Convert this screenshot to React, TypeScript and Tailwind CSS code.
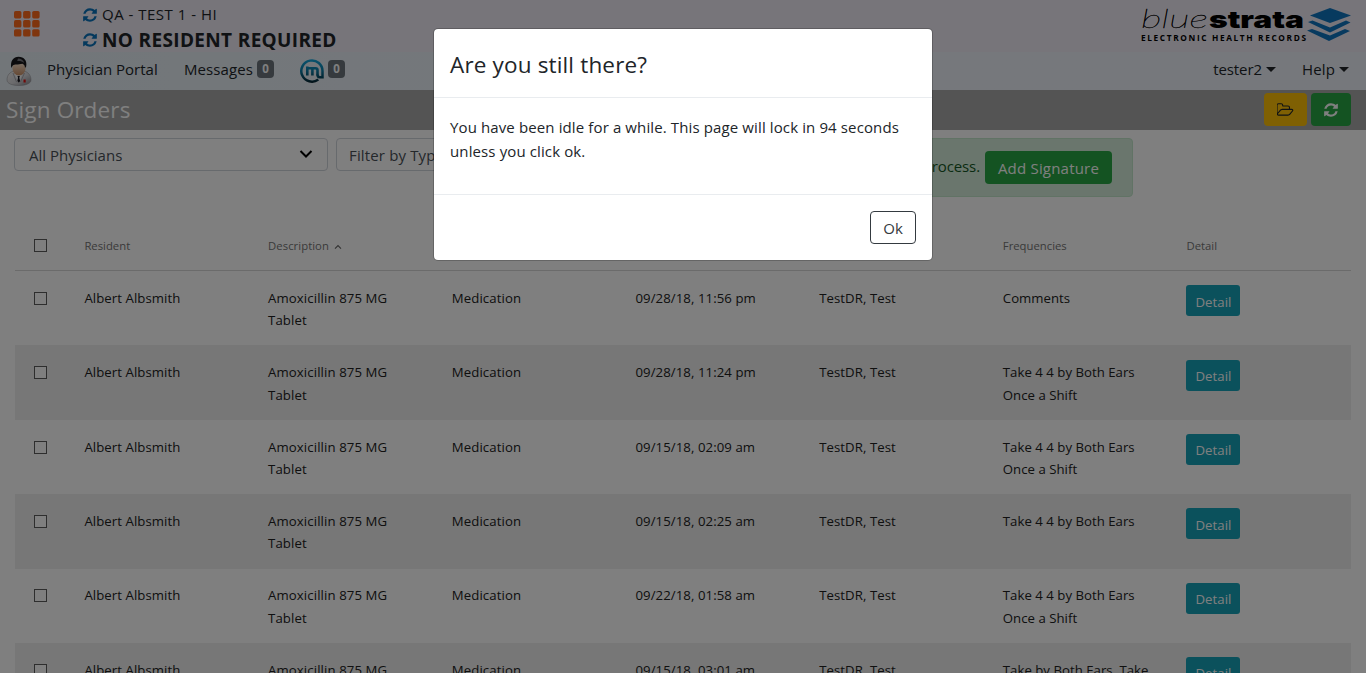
import React from "react";

const REFRESH =
  "M1639 1056q0 5-1 7-64 268-268 434.5t-478 166.5q-146 0-282.5-55t-243.5-157l-129 129q-19 19-45 19t-45-19-19-45v-448q0-26 19-45t45-19h448q26 0 45 19t19 45-19 45l-137 137q71 66 161 102t187 36q134 0 250-65t186-179q11-17 53-117 8-23 30-23h192q13 0 22.5 9.5t9.5 22.5zm25-800v448q0 26-19 45t-45 19h-448q-26 0-45-19t-19-45 19-45l138-138q-148-137-349-137-134 0-250 65t-186 179q-11 17-53 117-8 23-30 23h-199q-13 0-22.5-9.5t-9.5-22.5v-7q65-268 270-434.5t480-166.5q146 0 284 55.5t245 156.5l130-129q19-19 45-19t45 19 19 45z";
const FOLDER =
  "M1717 931q0-35-53-35h-1088q-40 0-85.5 21.5t-71.5 52.5l-294 363q-18 24-18 40 0 35 53 35h1088q40 0 86-22t71-53l294-363q18-22 18-39zm-1141-163h768v-160q0-40-28-68t-68-28h-576q-40 0-68-28t-28-68v-64q0-40-28-68t-68-28h-320q-40 0-68 28t-28 68v853l256-315q44-53 116-87.5t140-34.5zm1269 163q0 62-46 120l-295 363q-43 53-116 87.5t-140 34.5h-1088q-92 0-158-66t-66-158v-960q0-92 66-158t158-66h320q92 0 158 66t66 158v32h544q92 0 158 66t66 158v160h192q54 0 99 24.5t67 70.5q15 32 15 68z";

function RefreshIcon({ className }: { className: string }) {
  return (
    <svg viewBox="0 0 1792 1792" className={className} fill="currentColor">
      <path d={REFRESH} />
    </svg>
  );
}

function GridIcon() {
  return (
    <svg viewBox="0 0 26 26" className="h-[26px] w-[26px]" fill="#ff6a1c">
      {[0, 9.1, 18.2].map((y) =>
        [0, 9.1, 18.2].map((x) => <rect key={`${x}-${y}`} x={x} y={y} width="7.4" height="7.4" rx="1.6" />)
      )}
    </svg>
  );
}

function DoctorIcon() {
  return (
    <svg viewBox="0 0 26 30" className="h-[30px] w-[26px]">
      <defs>
        <linearGradient id="coat" x1="0" x2="1" y1="0" y2="1">
          <stop offset="0" stopColor="#f4f4f4" />
          <stop offset="0.55" stopColor="#d6d6da" />
          <stop offset="1" stopColor="#85858b" />
        </linearGradient>
        <linearGradient id="face" x1="0" x2="0" y1="0" y2="1">
          <stop offset="0" stopColor="#fff0de" />
          <stop offset="1" stopColor="#c98f65" />
        </linearGradient>
      </defs>
      <path d="M1 24c0-5 3-8 7-9l5 3 5-3c4 1 7 4 7 9 0 3.500-5 5.500-12 5.500S1 27.500 1 24z" fill="url(#coat)" stroke="#909096" strokeWidth=".5" />
      <path d="M8.500 17.500 12 25l1 2 3.500-9.500z" fill="#f8f8f8" />
      <path d="M11.500 20h2.400l-.6 1.800.8 3.200-1.200 1.800-1.500-1.800.6-3.200z" fill="#15151d" />
      <path d="M7 17l3.500 9M18.500 17l-4 9" stroke="#9a9aa2" strokeWidth=".8" />
      <ellipse cx="13" cy="12" rx="6.600" ry="7.600" fill="url(#face)" />
      <path d="M5.300 12C4 5 7.500.8 12.500.8c5.600 0 8.800 3.800 7.700 9.700L19 12c0-2-.8-3.500-2.500-4.200C12 9 8.500 8 6.800 9.500z" fill="#17171a" />
      <path d="M12 2.500c3 0 5.500 1.500 6.200 4.500-2-1.800-4-2.200-7-2z" fill="#77777d" />
      <rect x="17.500" y="23.500" width="2.200" height="3" fill="#e01515" />
    </svg>
  );
}

function MIcon() {
  return (
    <svg viewBox="0 0 24 24" className="h-6 w-6" fill="none">
      <defs>
        <linearGradient id="ring" x1="0" x2="0" y1="0" y2="24" gradientUnits="userSpaceOnUse">
          <stop offset="0" stopColor="#13a8df" />
          <stop offset="0.5" stopColor="#0b7ba5" />
          <stop offset="1" stopColor="#04202c" />
        </linearGradient>
      </defs>
      <path d="M18.300 20.500A10.600 10.600 0 1 1 22.500 12.500v5.700h-2.700c-1.500 0-2.300-.8-2.300-2.700" stroke="url(#ring)" strokeWidth="2.500" />
      <path d="M7.300 16.500V7.500M7.300 9.300H15.500q2 0 2 2v5.200M12.400 9v7.500" stroke="url(#ring)" strokeWidth="2.600" />
    </svg>
  );
}

function Logo() {
  return (
    <svg viewBox="0 0 214 38" className="h-[38px] w-[214px] overflow-visible">
      <text x="1" y="22.800" textLength="67" lengthAdjust="spacingAndGlyphs" fontFamily="Lato, sans-serif" fontStyle="italic" fontWeight="100" fontSize="26" stroke="#000" strokeWidth="0.35">
        blue
      </text>
      <text x="69" y="22.800" textLength="95" lengthAdjust="spacingAndGlyphs" fontFamily="Inter, sans-serif" fontWeight="900" fontSize="23.800">
        strata
      </text>
      <text x="1" y="36" textLength="165" lengthAdjust="spacing" fontFamily="Open Sans, sans-serif" fontWeight="700" fontSize="8.300">
        ELECTRONIC HEALTH RECORDS
      </text>
      <g fill="#0f74bf">
        <path d="M190 3 211 10.500 190 18 170 10.500z" />
        <path d="M168 17 172.500 15.500 190 22.500 206 15.500 210.500 17.500 190 27.500z" />
        <path d="M167 25.500 172 24 190 30.500 205 24 210 26 189 36z" />
      </g>
    </svg>
  );
}

function Badge() {
  return (
    <span className="mb-1 flex h-[18px] w-[17px] items-center justify-center rounded bg-[#6c757d] text-[11.500px] leading-none font-bold text-white">0</span>
  );
}

function Caret() {
  return <span className="mb-1 ml-1 h-0 w-0 border-x-[5px] border-t-[5px] border-x-transparent border-t-[#212529]" />;
}

const rows = [
  { date: "09/28/18, 11:56 pm", freq: "Comments" },
  { date: "09/28/18, 11:24 pm", freq: "Take 4 4 by Both Ears Once a Shift" },
  { date: "09/15/18, 02:09 am", freq: "Take 4 4 by Both Ears Once a Shift" },
  { date: "09/15/18, 02:25 am", freq: "Take 4 4 by Both Ears" },
  { date: "09/22/18, 01:58 am", freq: "Take 4 4 by Both Ears Once a Shift" },
  { date: "09/15/18, 03:01 am", freq: "Take by Both Ears, Take" },
];

const columns = "grid grid-cols-[50px_repeat(7,183.700px)]";

function Check() {
  return <span className="block h-[13px] w-[13px] border border-[#5c5c5c] bg-white" />;
}

function OrdersTable() {
  return (
    <div className="mx-[15px] mt-6 w-[1336px]">
      <div className={`${columns} h-[50px] items-center border-b border-[#d6d6d6] text-[11.300px] text-[#757575]`}>
        <div className="pl-[19px]"><Check /></div>
        <div className="pt-[2px] pl-[19.400px]">Resident</div>
        <div className="flex items-center pt-[2px] pl-[19.400px] tracking-[0.05px]">
          Description
          <svg viewBox="0 0 8 6" className="ml-[5px] h-[6px] w-2" fill="none" stroke="#666" strokeWidth="1.100">
            <path d="M1 4.700 4 1.500l3 3.200" />
          </svg>
        </div>
        <div />
        <div />
        <div />
        <div className="pt-[2px] pl-[19.400px]">Frequencies</div>
        <div className="pt-[2px] pl-[19.400px]">Detail</div>
      </div>
      {rows.map((r, i) => (
        <div
          key={i}
          className={`${columns} h-[74.380px] pt-[15.800px] text-[13.200px] leading-[22.400px] tracking-[0.07px] text-[#212121] ${i % 2 ? "bg-[#eeeeee]" : "bg-white"}`}
        >
          <div className="pt-[5px] pl-[19px]"><Check /></div>
          <div className="pl-[19.400px]">Albert Albsmith</div>
          <div className="px-[19.400px] tracking-[0.1px]">Amoxicillin 875 MG Tablet</div>
          <div className="pl-[19.400px] tracking-[0.1px]">Medication</div>
          <div className="pl-[19.400px]">{r.date}</div>
          <div className="pl-[19.400px]">TestDR, Test</div>
          <div className="pr-[16px] pl-[19.400px] tracking-[0.02px]">{r.freq}</div>
          <div className="-mt-[1.600px] pl-[18.800px]">
            <button className="block h-[31px] w-[54px] rounded-[3px] bg-[#17a2b8] pt-[3px] pl-px text-[13.200px] leading-none text-white">Detail</button>
          </div>
        </div>
      ))}
    </div>
  );
}

function Page() {
  return (
    <div className="flex h-full flex-col overflow-hidden">
      <header className="flex h-[52px] shrink-0 justify-between bg-[#eeeaf4]">
        <div className="flex">
          <div className="pt-[11px] pl-[14px]"><GridIcon /></div>
          <div className="pt-[2px] pl-[42px]">
            <div className="flex h-[25px] items-center gap-1 text-[15px] tracking-[0.5px]">
              <RefreshIcon className="h-4 w-4 text-[#0a73bb]" />
              QA - TEST 1 - HI
            </div>
            <div className="flex h-[26px] items-center gap-1 text-[19px] font-bold tracking-[0.35px]">
              <RefreshIcon className="h-4 w-4 text-[#0a73bb]" />
              NO RESIDENT REQUIRED
            </div>
          </div>
        </div>
        <div className="pt-[5px] pr-[12px]"><Logo /></div>
      </header>
      <nav className="flex h-[38px] shrink-0 items-center justify-between bg-linear-to-r from-[#e4edf3] via-[#ecf1f9] to-[#ecf1f9] text-[15px]">
        <div className="flex items-center">
          <div className="w-[47px] pl-[6px]"><DoctorIcon /></div>
          <span className="w-[137px] pb-1">Physician Portal</span>
          <span className="w-[73px] pb-1 tracking-[0.1px]">Messages</span>
          <Badge />
          <span className="mr-1 ml-[26px]"><MIcon /></span>
          <Badge />
        </div>
        <div className="flex items-center pr-[17px]">
          <span className="pb-1 tracking-[-0.1px]">tester2</span>
          <Caret />
          <span className="ml-[26px] pb-1 tracking-[0.15px]">Help</span>
          <Caret />
        </div>
      </nav>
      <div className="flex h-10 shrink-0 items-center justify-between bg-[#a8a8a8] pr-[15px] pl-[6px]">
        <h1 className="text-[22.500px] tracking-[0.15px] text-white">Sign Orders</h1>
        <div className="flex gap-1 pb-px">
          <button className="flex h-[33px] w-[43px] items-center justify-center rounded bg-[#ffc107] text-[#212529]">
            <svg viewBox="0 0 1920 1792" className="h-4 w-[17px]" fill="currentColor"><path d={FOLDER} /></svg>
          </button>
          <button className="flex h-[33px] w-10 items-center justify-center rounded bg-[#28a745] text-white">
            <RefreshIcon className="h-4 w-4" />
          </button>
        </div>
      </div>
      <div className="flex h-[67px] shrink-0 items-start pt-2 pl-[14px] text-[15px]">
        <div className="flex h-[33px] w-[314px] items-center justify-between rounded border border-[#ced4da] pr-[14px] pl-[14px] text-[#495057]">
          <span className="pt-[2px]">All Physicians</span>
          <svg viewBox="0 0 14 10" className="mb-px h-[10px] w-[14px]" fill="none" stroke="#000" strokeWidth="2"><path d="M1.500 2 7 7.500 12.500 2" /></svg>
        </div>
        <div className="ml-2 flex h-[33px] w-[314px] items-center rounded border border-[#ced4da] pt-[2px] pl-[12px] tracking-[0.15px] text-[#495057]">Filter by Type</div>
        <div className="ml-2 flex h-[59px] w-[475px] items-center justify-end gap-[5px] rounded border border-[#c3e6cb] bg-[#d4edda] pr-[20px] text-[#155724]">
          <span className="pb-[2px] tracking-[-0.1px]">process.</span>
          <button className="h-[33px] w-[127px] rounded bg-[#28a745] pt-[2px] text-[15px] tracking-[0.2px] text-white">Add Signature</button>
        </div>
      </div>
      <OrdersTable />
    </div>
  );
}

function IdleDialog() {
  return (
    <div role="dialog" className="mt-7 flex h-[233px] w-[500px] flex-col rounded-[5px] border border-black/20 bg-white bg-clip-padding">
      <div className="flex h-[69px] items-center border-b border-[#e9ecef] px-4 pt-[3px] text-[22.500px] tracking-[0.16px]">Are you still there?</div>
      <div className="h-[96px] px-4 pt-[17px] text-[15px] leading-6 tracking-[0.12px]">
        You have been idle for a while. This page will lock in 94 seconds unless you click ok.
      </div>
      <div className="flex flex-1 items-start justify-end border-t border-[#e9ecef] p-4">
        <button className="h-[33px] w-[46px] rounded border border-[#343a40] pt-px text-[15px] text-[#343a40]">Ok</button>
      </div>
    </div>
  );
}

export default function App() {
  return (
    <div className="relative h-[673px] w-[1366px] overflow-hidden bg-white font-['Open_Sans',sans-serif] text-[#212529]">
      <Page />
      <div className="absolute inset-0 flex items-start justify-center bg-black/50">
        <IdleDialog />
      </div>
    </div>
  );
}
